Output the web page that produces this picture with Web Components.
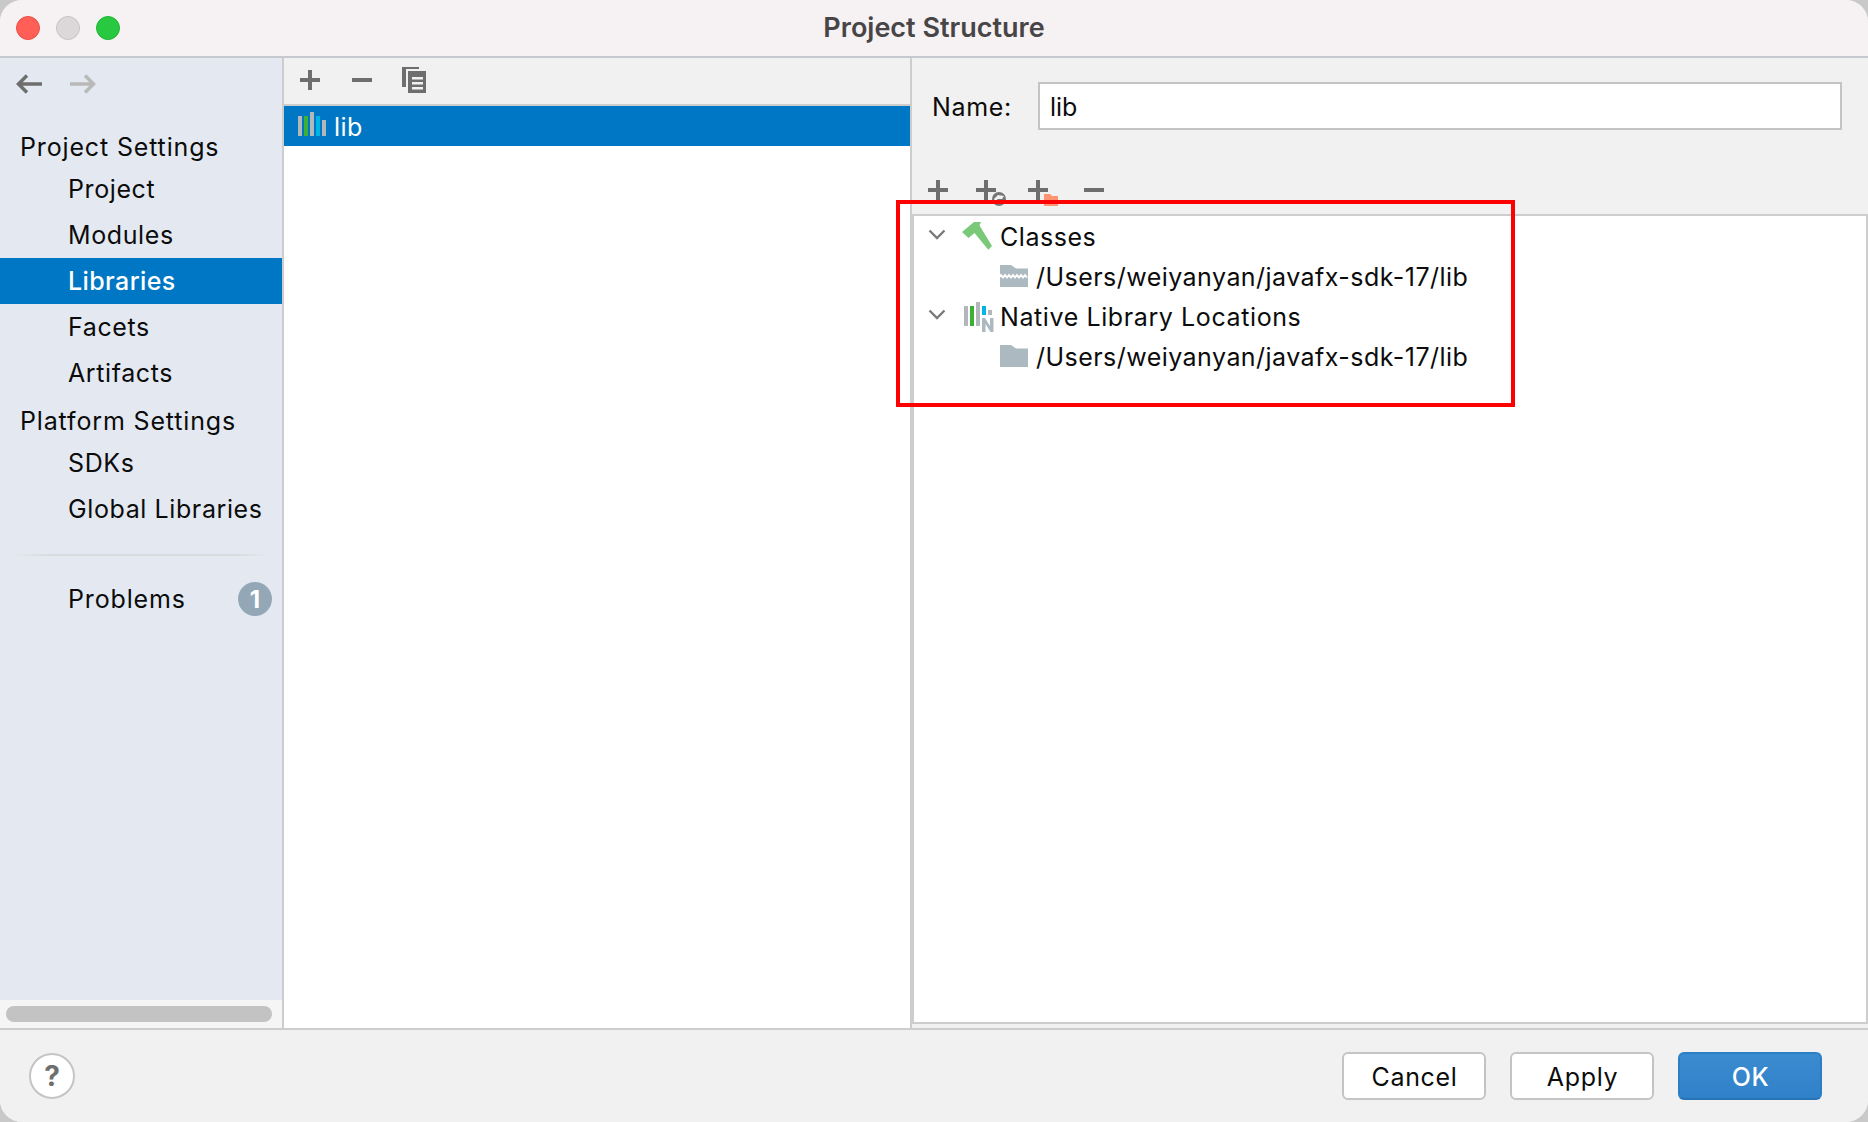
<!DOCTYPE html>
<html lang="en">
<head>
<meta charset="utf-8">
<title>Project Structure</title>
<style>
html,body{margin:0;padding:0;height:100%;background:#c9c9c9;overflow:hidden}
body{font:25px Inter,"Liberation Sans",sans-serif;color:#0c0c0c}
</style>
</head>
<body>
<app-window>
  <title-bar slot="title">Project Structure</title-bar>
  <nav-sidebar slot="nav">
    <nav-item kind="head">Project Settings</nav-item>
    <nav-item>Project</nav-item>
    <nav-item>Modules</nav-item>
    <nav-item selected>Libraries</nav-item>
    <nav-item>Facets</nav-item>
    <nav-item>Artifacts</nav-item>
    <nav-item kind="head2">Platform Settings</nav-item>
    <nav-item>SDKs</nav-item>
    <nav-item>Global Libraries</nav-item>
    <nav-separator></nav-separator>
    <nav-item badge="1">Problems</nav-item>
  </nav-sidebar>
  <library-list slot="list"></library-list>
  <library-detail slot="detail">
    <tree-row arrow icon="hammer">Classes</tree-row>
    <tree-row indent icon="jar">/Users/weiyanyan/javafx-sdk-17/lib</tree-row>
    <tree-row arrow icon="native" wide>Native Library Locations</tree-row>
    <tree-row indent icon="folder">/Users/weiyanyan/javafx-sdk-17/lib</tree-row>
  </library-detail>
  <dialog-footer slot="footer">
    <dialog-button>Cancel</dialog-button>
    <dialog-button>Apply</dialog-button>
    <dialog-button primary>OK</dialog-button>
  </dialog-footer>
  <red-callout slot="overlay"></red-callout>
</app-window>

<script>
const ICONS = {
  plus:`<svg width="20" height="20" viewBox="0 0 20 20"><path d="M8 0h4v8h8v4h-8v8H8v-8H0V8h8z" fill="#6e6e6e"/></svg>`,
  minus:`<svg width="20" height="20" viewBox="0 0 20 20"><path d="M0 8h20v4H0z" fill="#6e6e6e"/></svg>`,
  copy:`<svg width="24" height="26" viewBox="0 0 24 26"><path d="M0 0h17v2H4v18H0z" fill="#6e6e6e"/><path d="M6 4h18v22H6z" fill="#6e6e6e"/><path d="M10 10h11v2.500H10zM10 15h11v2.500H10zM10 20h11v2.500H10z" fill="#f1f1f1"/></svg>`,
  back:`<svg width="26" height="20" viewBox="0 0 26 20"><path d="M26 10H3M11 1.500 2.500 10l8.500 8.500" fill="none" stroke="#6e6e6e" stroke-width="3.500"/></svg>`,
  forward:`<svg width="26" height="20" viewBox="0 0 26 20"><path d="M0 10h23M15 1.500 23.500 10 15 18.500" fill="none" stroke="#b9b9b9" stroke-width="3.500"/></svg>`,
  lib:`<svg width="28" height="24" viewBox="0 0 28 24"><path d="M0 4h4v20H0z" fill="#b1b7ba"/><path d="M6 4h4v20H6z" fill="#3cb034"/><path d="M12 0h4v24h-4z" fill="#b1b7ba"/><path d="M18 4h4v20h-4z" fill="#00b4e6"/><path d="M24 8h4v16h-4z" fill="#b1b7ba"/></svg>`,
  chevron:`<svg width="18" height="12" viewBox="0 0 18 12"><path d="M1.500 1.500 9 9l7.500-7.500" fill="none" stroke="#7b7b7b" stroke-width="2.400"/></svg>`,
  hammer:`<svg width="30" height="30" viewBox="0 0 30 30"><path d="M0 11 12 1h7l-1.500 3.500L30 25l-3.700 3.700L12.500 12 6.500 17z" fill="#7ac979"/></svg>`,
  jar:`<svg width="28" height="22" viewBox="0 0 28 22"><path d="M0 0h11l5 3.500h12V22H0z" fill="#adb9c1"/><path d="M-1 12.500l2-2.500 2 2.500 2-2.500 2 2.500 2-2.500 2 2.500 2-2.500 2 2.500 2-2.500 2 2.500 2-2.500 2 2.500 2-2.500 2 2.500" fill="none" stroke="#fff" stroke-width="2"/></svg>`,
  folder:`<svg width="28" height="22" viewBox="0 0 28 22"><path d="M0 0h11l5 3.500h12V22H0z" fill="#adb9c1"/></svg>`,
  native:`<svg width="30" height="30" viewBox="0 0 30 30"><path d="M0 4h4v20H0z" fill="#b1b7ba"/><path d="M6 4h4v20H6z" fill="#3cb034"/><path d="M12 0h4v24h-4z" fill="#b1b7ba"/><path d="M18 4h4v9h-4z" fill="#00b4e6"/><path d="M24 8h4v5h-4z" fill="#b1b7ba"/><path d="M18 30V16h3l5 8v-8h3.500v14h-3l-5-8v8z" fill="#adb9c1"/></svg>`
};

function define(name, css, html, init){
  const t=document.createElement('template');
  t.innerHTML=`<style>${css}</style>${html}`;
  customElements.define(name,class extends HTMLElement{
    constructor(){super();this.attachShadow({mode:'open'}).appendChild(t.content.cloneNode(true));}
    connectedCallback(){init&&init.call(this,this.shadowRoot);}
  });
}

define('app-window',`
 :host{display:grid;position:relative;width:1868px;height:1122px;grid-template-columns:284px 628px 1fr;grid-template-rows:58px 970px 94px;grid-template-areas:"t t t" "n l d" "f f f";border-radius:22px;overflow:hidden;background:#f1f1f1}
 ::slotted([slot=title]){grid-area:t}::slotted([slot=nav]){grid-area:n}::slotted([slot=list]){grid-area:l}::slotted([slot=detail]){grid-area:d}::slotted([slot=footer]){grid-area:f}
`,`<slot name="title"></slot><slot name="nav"></slot><slot name="list"></slot><slot name="detail"></slot><slot name="footer"></slot><slot name="overlay"></slot>`);

define('title-bar',`
 :host{display:flex;align-items:center;justify-content:center;position:relative;background:#f6f1f3;border-bottom:2px solid #c6c9cf;box-sizing:border-box;font-weight:600;font-size:27px;color:#474546}
 .lights{position:absolute;left:16px;top:16px;display:flex;gap:16px}
 i{display:block;width:24px;height:24px;border-radius:50%;box-sizing:border-box}
 .r{background:#ff5f57;border:1px solid #e8504a}.g{background:#dcd8d9;border:1px solid #c7c3c4}.v{background:#28c840;border:1px solid #22b539}
 span{transform:translateY(-1px)}
`,`<div class="lights"><i class="r"></i><i class="g"></i><i class="v"></i></div><span><slot></slot></span>`);

define('nav-sidebar',`
 :host{display:flex;flex-direction:column;background:#e4e9f1;border-right:2px solid #cdcdcd;box-sizing:border-box;min-height:0}
 .arrows{display:flex;gap:28px;height:52px;padding:0 16px;box-sizing:border-box;flex:none;align-items:center}
 .items{flex:1;padding-top:16px;display:flex;flex-direction:column}
 .sb{height:28px;background:#f5f5f5;flex:none;padding:6px 10px 6px 6px;box-sizing:border-box}
 .sb b{display:block;height:16px;background:#c3c3c3;border-radius:8px}
`,`<div class="arrows">${ICONS.back}${ICONS.forward}</div><div class="items"><slot></slot></div><div class="sb"><b></b></div>`);

define('nav-item',`
 :host{display:flex;align-items:center;height:46px;padding-left:68px;box-sizing:border-box;position:relative;white-space:nowrap;letter-spacing:.6px}
 :host([kind=head]){padding-left:20px;height:40px;padding-top:2px;letter-spacing:.85px}
 :host([kind=head2]){padding-left:20px;height:44px;padding-top:6px;letter-spacing:.85px}
 :host([badge]){letter-spacing:.85px}
 :host([selected]){background:#0077c4;color:#fff;font-weight:500;letter-spacing:.4px}
 .badge{position:absolute;left:238px;top:6px;width:34px;height:34px;border-radius:50%;background:#94a7b7;color:#fff;font-weight:700;font-size:24px;display:flex;align-items:center;justify-content:center;letter-spacing:0}
`,`<slot></slot>`,function(r){
  if(this.hasAttribute('badge')&&!r.querySelector('.badge')){const b=document.createElement('span');b.className='badge';b.textContent=this.getAttribute('badge');r.appendChild(b);}
});

define('nav-separator',`
 :host{display:block;height:2px;margin:22px 12px 20px 12px;background:linear-gradient(90deg,#e4e9f1,#d9dbdf 14%,#d9dbdf 88%,#e4e9f1)}
`,``);

define('library-list',`
 :host{display:flex;flex-direction:column;background:#fff;border-right:2px solid #cdcdcd;box-sizing:border-box;min-height:0}
 .tb{height:48px;flex:none;background:#f1f1f1;border-bottom:2px solid #cdcdcd;box-sizing:border-box;display:flex;align-items:center;padding:0 0 2px 16px;gap:32px}
 .tb svg:last-child{margin-left:-2px}
 .row{height:40px;background:#0077c4;color:#fff;display:flex;align-items:center;padding-left:14px;gap:8px;letter-spacing:.5px}
 .row svg{margin-bottom:4px}
 .row span{position:relative;top:1px}
`,`<div class="tb">${ICONS.plus}${ICONS.minus}${ICONS.copy}</div><div class="row">${ICONS.lib}<span>lib</span></div>`);

define('library-detail',`
 :host{display:flex;flex-direction:column;min-height:0;background:#f1f1f1;box-sizing:border-box;padding-bottom:4px}
 .name{height:72px;margin-top:24px;flex:none;display:flex;align-items:flex-start;box-sizing:border-box;padding-left:20px}
 .name label{width:106px;height:48px;display:flex;align-items:center;letter-spacing:.65px;padding-top:2px;box-sizing:border-box}
 .field{width:804px;height:48px;box-sizing:border-box;background:#fff;border:2px solid #c4c4c4;display:flex;align-items:center;padding:2px 0 0 10px}
 .tools{height:60px;flex:none;display:flex;align-items:flex-start;padding:26px 0 0 16px;box-sizing:border-box}
 .t{position:relative;width:20px;height:20px;margin-right:28px}
 .t:nth-child(2){margin-right:32px}.t:nth-child(3){margin-right:36px}
 .tree{flex:1;background:#fff;border:2px solid #cdcdcd;box-sizing:border-box;padding-top:1px}
 .t svg{display:block}
 .t .o{position:absolute;left:16px;top:12px}
`,`<div class="name"><label>Name:</label><div class="field">lib</div></div>
<div class="tools">
 <div class="t">${ICONS.plus}</div>
 <div class="t">${ICONS.plus}<svg class="o" width="14" height="14" viewBox="0 0 14 14"><circle cx="7" cy="7" r="7" fill="#777"/><path d="M2 7l4-4 6 1-2 3-5 0 2 4-3 0z" fill="#f1f1f1"/></svg></div>
 <div class="t">${ICONS.plus}<svg class="o" style="top:14px" width="14" height="12" viewBox="0 0 14 12"><path d="M0 0h6l2 2h6v10H0z" fill="#ff9570"/></svg></div>
 <div class="t">${ICONS.minus}</div>
</div>
<div class="tree"><slot></slot></div>`);

define('tree-row',`
 :host{display:flex;align-items:center;height:40px;position:relative;white-space:nowrap;letter-spacing:.55px;box-sizing:border-box;padding-left:86px}
 :host([indent]){padding-left:122px;letter-spacing:.46px}
 :host([wide]){letter-spacing:.6px}
 .c{position:absolute;left:14px;top:12px;display:block;line-height:0}
 .i{position:absolute;display:block;line-height:0}
`,`<span class="c"></span><span class="i"></span><span><slot></slot></span>`,function(r){
  const c=r.querySelector('.c'), i=r.querySelector('.i');
  if(this.hasAttribute('arrow')) c.innerHTML=ICONS.chevron;
  const k=this.getAttribute('icon'); i.innerHTML=ICONS[k];
  const pos={hammer:[48,4],jar:[86,8],native:[50,5],folder:[86,8]}[k];
  i.style.left=pos[0]+'px'; i.style.top=pos[1]+'px';
});

define('dialog-footer',`
 :host{display:flex;align-items:center;background:#f1f1f1;border-top:2px solid #cdcdcd;box-sizing:border-box;position:relative;padding:0 46px 0 0;justify-content:flex-end;gap:24px}
 .help{position:absolute;left:29px;top:23px;width:46px;height:46px;box-sizing:border-box;border-radius:50%;background:#fff;border:2px solid #c4c4c4;display:flex;align-items:center;justify-content:center;color:#6e6e6e;font-weight:700;font-size:28px}
`,`<div class="help">?</div><slot></slot>`);

define('dialog-button',`
 :host{display:flex;align-items:center;justify-content:center;width:144px;height:48px;box-sizing:border-box;background:#fff;border:2px solid #c4c4c4;border-radius:6px;letter-spacing:.65px;padding:2px 0 0 1px}
 :host([primary]){background:linear-gradient(#3b8bd0,#2f81c9);border-color:#2d7fc5;border-bottom-color:#2673b6;color:#fff;font-weight:500}
`,`<slot></slot>`);

define('red-callout',`
 :host{display:block;position:absolute;left:896px;top:200px;width:619px;height:207px;box-sizing:border-box;border:4px solid #ff0000;pointer-events:none}
`,``);
</script>
</body>
</html>
